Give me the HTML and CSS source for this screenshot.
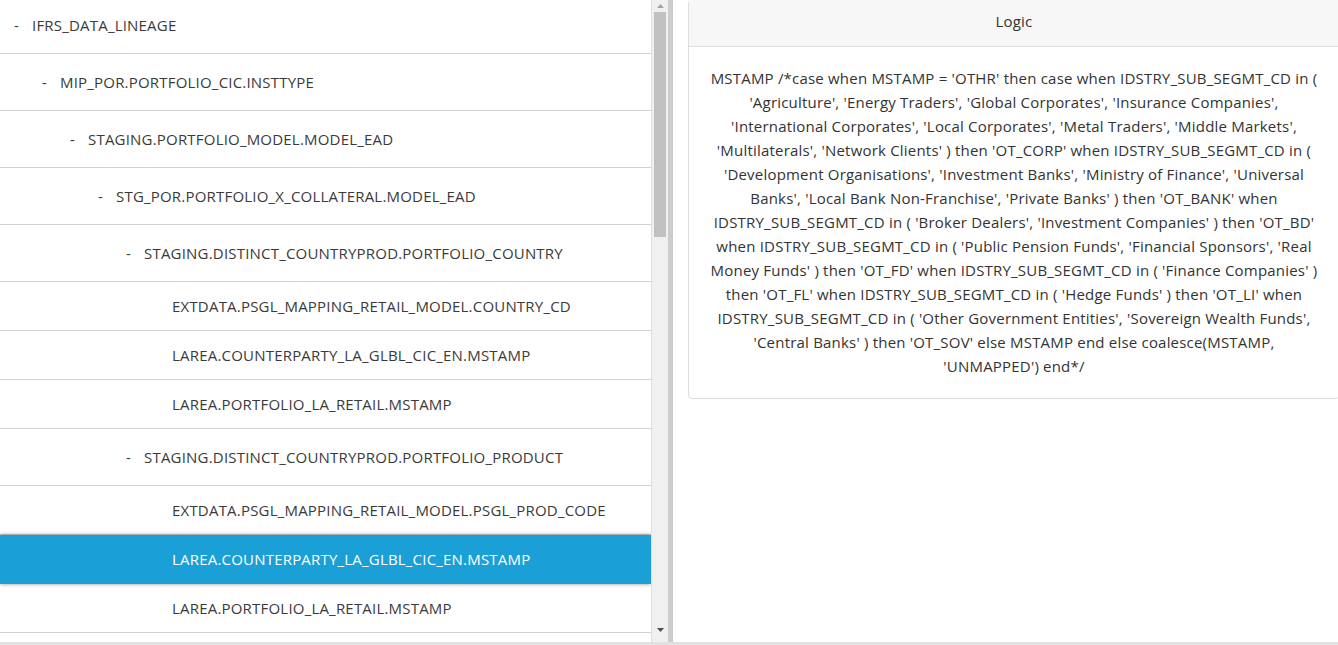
FILE: index.html
```html
<!DOCTYPE html>
<html>
<head>
<meta charset="utf-8">
<link rel="stylesheet" href="styles.css">
</head>
<body>
<div class="app">
  <div class="main">
    <div class="left">
      <div class="tree">
        <div class="row first lv0"><span class="dash">-</span><span>IFRS_DATA_LINEAGE</span></div>
        <div class="row parent lv1"><span class="dash">-</span><span>MIP_POR.PORTFOLIO_CIC.INSTTYPE</span></div>
        <div class="row parent lv2"><span class="dash">-</span><span>STAGING.PORTFOLIO_MODEL.MODEL_EAD</span></div>
        <div class="row parent lv3"><span class="dash">-</span><span>STG_POR.PORTFOLIO_X_COLLATERAL.MODEL_EAD</span></div>
        <div class="row parent lv4"><span class="dash">-</span><span>STAGING.DISTINCT_COUNTRYPROD.PORTFOLIO_COUNTRY</span></div>
        <div class="row leaf lv5"><span class="dash"></span><span>EXTDATA.PSGL_MAPPING_RETAIL_MODEL.COUNTRY_CD</span></div>
        <div class="row leaf lv5"><span class="dash"></span><span>LAREA.COUNTERPARTY_LA_GLBL_CIC_EN.MSTAMP</span></div>
        <div class="row leaf lv5"><span class="dash"></span><span>LAREA.PORTFOLIO_LA_RETAIL.MSTAMP</span></div>
        <div class="row parent lv4"><span class="dash">-</span><span>STAGING.DISTINCT_COUNTRYPROD.PORTFOLIO_PRODUCT</span></div>
        <div class="row leaf lv5"><span class="dash"></span><span>EXTDATA.PSGL_MAPPING_RETAIL_MODEL.PSGL_PROD_CODE</span></div>
        <div class="row leaf lv5 selected"><span class="dash"></span><span>LAREA.COUNTERPARTY_LA_GLBL_CIC_EN.MSTAMP</span></div>
        <div class="row leaf lv5"><span class="dash"></span><span>LAREA.PORTFOLIO_LA_RETAIL.MSTAMP</span></div>
      </div>
      <div class="scrollbar">
        <div class="arrow up"><svg width="7" height="4" viewBox="0 0 7 4"><path d="M0 4 L3.5 0 L7 4 Z" fill="#a3a3a3"/></svg></div>
        <div class="thumb"></div>
        <div class="track"></div>
        <div class="arrow down"><svg width="7" height="4" viewBox="0 0 7 4"><path d="M0 0 L3.5 4 L7 0 Z" fill="#505050"/></svg></div>
      </div>
    </div>
    <div class="splitter"></div>
    <div class="right">
      <div class="card">
        <div class="card-header">Logic</div>
        <div class="card-body">MSTAMP /*case when MSTAMP = 'OTHR' then case when IDSTRY_SUB_SEGMT_CD in (<br>'Agriculture', 'Energy Traders', 'Global Corporates', 'Insurance Companies',<br>'International Corporates', 'Local Corporates', 'Metal Traders', 'Middle Markets',<br>'Multilaterals', 'Network Clients' ) then 'OT_CORP' when IDSTRY_SUB_SEGMT_CD in (<br>'Development Organisations', 'Investment Banks', 'Ministry of Finance', 'Universal<br>Banks', 'Local Bank Non-Franchise', 'Private Banks' ) then 'OT_BANK' when<br>IDSTRY_SUB_SEGMT_CD in ( 'Broker Dealers', 'Investment Companies' ) then 'OT_BD'<br>when IDSTRY_SUB_SEGMT_CD in ( 'Public Pension Funds', 'Financial Sponsors', 'Real<br>Money Funds' ) then 'OT_FD' when IDSTRY_SUB_SEGMT_CD in ( 'Finance Companies' )<br>then 'OT_FL' when IDSTRY_SUB_SEGMT_CD in ( 'Hedge Funds' ) then 'OT_LI' when<br>IDSTRY_SUB_SEGMT_CD in ( 'Other Government Entities', 'Sovereign Wealth Funds',<br>'Central Banks' ) then 'OT_SOV' else MSTAMP end else coalesce(MSTAMP,<br>'UNMAPPED') end*/</div>
      </div>
    </div>
  </div>
  <div class="bottom-line"></div>
</div>
</body>
</html>
```
FILE: styles.css
```css
* { box-sizing: border-box; }
html, body { margin: 0; padding: 0; overflow: hidden; background: #fff; }
body {
  font-family: "Open Sans", "Noto Sans", "Liberation Sans", sans-serif;
  font-size: 15px;
  letter-spacing: 0.2px;
  color: #333;
}
.app { width: 1338px; height: 645px; display: flex; flex-direction: column; }
.main { flex: 1; display: flex; min-height: 0; }
.left { width: 668px; display: flex; flex-shrink: 0; }
.tree {
  width: 652px;
  border-right: 1px solid #d6e2ec;
  overflow: hidden;
}
.row {
  display: flex;
  align-items: center;
  border-bottom: 1px solid #d2d2d2;
  white-space: nowrap;
  color: #3a3a3a;
}
.row.first { height: 54px; padding-bottom: 4px; }
.row.parent { height: 57px; }
.row.leaf { height: 49px; }
.dash { width: 18px; flex-shrink: 0; }
.lv0 { padding-left: 14px; }
.lv1 { padding-left: 42px; }
.lv2 { padding-left: 70px; }
.lv3 { padding-left: 98px; }
.lv4 { padding-left: 126px; }
.lv5 { padding-left: 154px; }
.row.selected {
  background: #1a9fd6;
  color: #fff;
  border-bottom-color: #1a9fd6;
  box-shadow: 0 0 4px rgba(0,0,0,0.45);
  position: relative;
}
.scrollbar {
  width: 16px;
  background: #f0f0f0;
  display: flex;
  flex-direction: column;
  align-items: center;
}
.arrow { height: 12px; width: 100%; display: flex; align-items: center; justify-content: center; }
.thumb { width: 12px; height: 225px; background: #c1c1c1; }
.track { flex: 1; }
.arrow.down { height: 18px; align-items: flex-start; padding-top: 4px; }
.splitter { width: 5px; background: #cdcdcd; flex-shrink: 0; }
.right { flex: 1; padding-left: 15px; min-width: 0; }
.card {
  margin-top: -1px;
  margin-right: -2px;
  border: 1px solid #dedede;
  border-radius: 4px;
  background: #fff;
}
.card-header {
  height: 47px;
  background: #f7f7f7;
  border-bottom: 1px solid #dedede;
  display: flex;
  align-items: center;
  justify-content: center;
  color: #333;
  padding-bottom: 4px;
}
.card-body {
  padding: 19px 20px 20px 20px;
  text-align: center;
  line-height: 24px;
  white-space: nowrap;
  color: #333;
}
.bottom-line { height: 3px; background: #e1e1e1; }
```
